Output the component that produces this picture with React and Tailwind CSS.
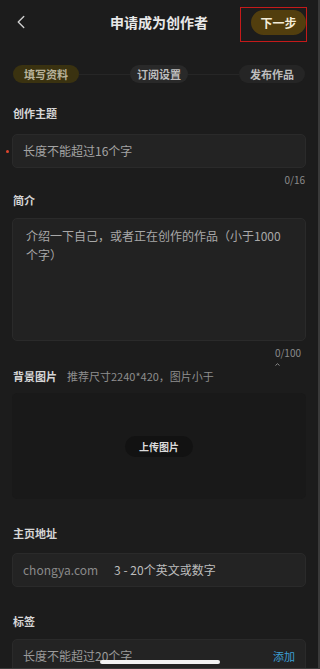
import React from 'react';
import { ChevronLeft } from 'lucide-react';

const font = { fontFamily: '"Noto Sans CJK SC", "Noto Sans", sans-serif' };

function Label({ children, className = '' }) {
  return <div className={`px-[13px] text-[11px] font-bold text-[#d6d6d6] ${className}`}>{children}</div>;
}

export default function App() {
  return (
    <div
      className="relative w-[320px] h-[669px] overflow-hidden bg-[#1c1c1c] border-r-2 border-b border-[#3a3a3a]"
      style={font}
    >
      {/* header */}
      <div className="relative h-[44px] flex items-center justify-center">
        <ChevronLeft className="absolute left-[10px] top-[11px] w-[22px] h-[22px] text-[#cfcfcf]" strokeWidth={1.5} />
        <div className="text-[14px] font-bold text-[#e8e8e8]">申请成为创作者</div>
        <div className="absolute left-[251px] top-[10px] w-[55px] h-[25px] rounded-full bg-[#523e0e] flex items-center justify-center text-[12px] font-bold text-[#f3ecd9]">
          下一步
        </div>
        <div className="absolute left-[240px] top-[7px] w-[67px] h-[35px] border border-[#c41a1a]" />
      </div>

      {/* steps */}
      <div className="mt-[21px] h-[18px] px-[13px] flex items-center">
        <div className="w-[66px] h-[18px] rounded-full bg-[#3a3210] flex items-center justify-center text-[11px] font-bold text-[#b8b29a]">
          填写资料
        </div>
        <div className="flex-1 h-px bg-[#262626]" />
        <div className="w-[58px] h-[18px] rounded-full bg-[#292929] flex items-center justify-center text-[11px] font-bold text-[#bdbdbd]">
          订阅设置
        </div>
        <div className="flex-1 h-px bg-[#262626]" />
        <div className="w-[66px] h-[18px] rounded-full bg-[#252525] flex items-center justify-center text-[11px] font-bold text-[#bdbdbd]">
          发布作品
        </div>
      </div>

      <Label className="mt-[22px] leading-[16px]">创作主题</Label>

      <div className="relative mt-[13px] mx-[12px] h-[34px] rounded-[5px] bg-[#232323] border border-[#2a2a2a] flex items-center px-[10px]">
        <span className="absolute -left-[7px] top-[15px] w-[3px] h-[3px] rounded-full bg-[#e0452d]" />
        <span className="text-[12px] text-[#a3a3a3]">长度不能超过16个字</span>
      </div>
      <div className="mt-[5px] pr-[13px] text-right text-[10px] leading-[14px] text-[#8a8a8a]">0/16</div>

      <Label className="mt-[5px] leading-[16px]">简介</Label>

      <div className="mt-[10px] mx-[12px] h-[123px] rounded-[5px] bg-[#222222] border border-[#2a2a2a] px-[13px] py-[7px]">
        <p className="text-[12px] leading-[19px] text-[#a8a8a8]">介绍一下自己，或者正在创作的作品（小于1000个字）</p>
      </div>
      <div className="mt-[5px] pr-[17px] text-right text-[10px] leading-[14px] text-[#8a8a8a]">0/100</div>
      <div className="mt-[3px] h-[4px] pl-[275px] flex">
        <svg width="5" height="3" viewBox="0 0 5 3" fill="none" stroke="#8a8a8a" strokeWidth="1">
          <polyline points="0.5,2.5 2.5,0.7 4.5,2.5" />
        </svg>
      </div>

      <div className="mt-[1px] px-[13px] flex items-center gap-[10px] leading-[16px]">
        <span className="text-[11px] font-bold text-[#d6d6d6]">背景图片</span>
        <span className="text-[11px] text-[#8e8e8e]">推荐尺寸2240*420，图片小于</span>
      </div>

      <div className="mt-[9px] mx-[12px] h-[106px] rounded-[5px] bg-[#191919] flex items-center justify-center">
        <div className="w-[68px] h-[21px] rounded-full bg-[#121212] flex items-center justify-center text-[10px] font-bold text-[#dcdcdc]">
          上传图片
        </div>
      </div>

      <Label className="mt-[26px] leading-[16px]">主页地址</Label>

      <div className="mt-[12px] mx-[12px] h-[34px] rounded-[5px] bg-[#232323] border border-[#2a2a2a] flex items-center px-[10px] gap-[16px]">
        <span className="text-[12px] text-[#8a8a8a]">chongya.com</span>
        <span className="text-[12px] text-[#bdbdbd]">3 - 20个英文或数字</span>
      </div>

      <Label className="mt-[26px] leading-[16px]">标签</Label>

      <div className="mt-[10px] mx-[12px] h-[34px] rounded-[5px] bg-[#232323] border border-[#2a2a2a] flex items-center justify-between px-[10px]">
        <span className="text-[12px] text-[#9a9a9a]">长度不能超过20个字</span>
        <span className="text-[11px] text-[#3d9fd3]">添加</span>
      </div>

      {/* home indicator */}
      <div className="absolute left-[100px] bottom-[4px] w-[120px] h-[4px] rounded-full bg-[#f2f2f2]" />
    </div>
  );
}
